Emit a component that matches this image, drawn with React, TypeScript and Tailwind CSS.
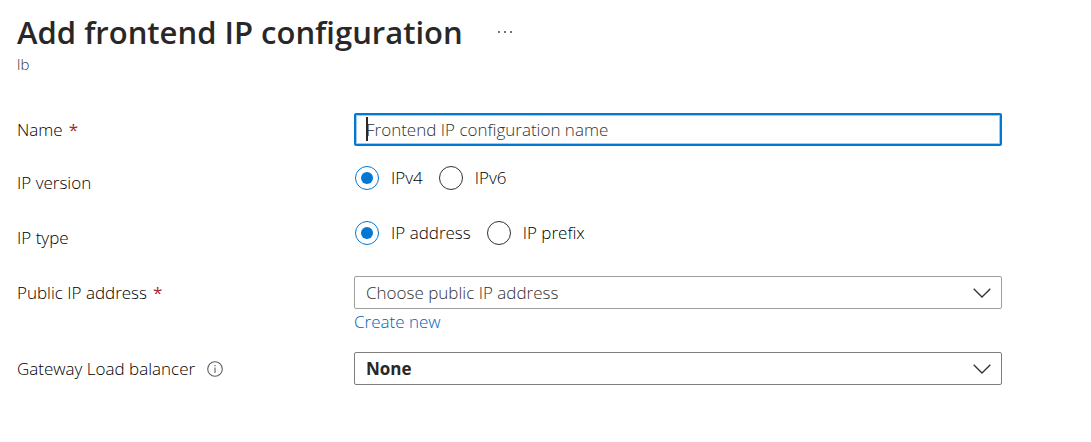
import { useId, useState } from "react";
import type { ReactNode, SelectHTMLAttributes } from "react";

function Required() {
  return (
    <span aria-hidden="true" className="ml-1.5 font-medium text-[#a4262c]">
      *
    </span>
  );
}

function Row({ className, label, children }: { className: string; label: ReactNode; children: ReactNode }) {
  return (
    <div className={`flex items-start ${className}`}>
      <div className="flex w-[337px] shrink-0 items-center pt-[5px]">{label}</div>
      <div className="min-w-0 max-w-[648px] flex-1">{children}</div>
    </div>
  );
}

function SelectBox({ className, ...props }: SelectHTMLAttributes<HTMLSelectElement>) {
  return (
    <div className="relative">
      <select
        {...props}
        className={`block h-[33px] w-full appearance-none rounded-xs border bg-white pr-10 pl-[11px] outline-none ${className}`}
      />
      <svg
        aria-hidden="true"
        viewBox="0 0 18 10"
        className="pointer-events-none absolute top-3 right-[11px] h-2.5 w-[18px] fill-none stroke-[#323130]"
        strokeWidth="1.3"
      >
        <path d="M0.7 0.7 9 9 17.3 0.7" />
      </svg>
    </div>
  );
}

function RadioGroup({ labelledBy, options }: { labelledBy: string; options: string[] }) {
  const [value, setValue] = useState(options[0]);
  const name = useId();
  return (
    <div role="radiogroup" aria-labelledby={labelledBy} className="flex gap-4 pl-px">
      {options.map((option) => (
        <label key={option} className="flex items-center gap-3">
          <input
            type="radio"
            name={name}
            checked={value === option}
            onChange={() => setValue(option)}
            className="grid size-6 shrink-0 appearance-none place-content-center rounded-full border border-[#323130] bg-white before:size-3 before:rounded-full checked:border-[#0078d4] checked:before:bg-[#0078d4]"
          />
          {option}
        </label>
      ))}
    </div>
  );
}

export default function App() {
  const [name, setName] = useState("");
  return (
    <main className="bg-white px-[17px] pt-3 pb-14 font-['Open_Sans','Noto_Sans',sans-serif] text-[17px] leading-6 font-light text-black">
      <header>
        <div className="flex items-center gap-[34px]">
          <h1 className="text-[31px] leading-10 font-semibold text-[#292827]">Add frontend IP configuration</h1>
          <button type="button" aria-label="More options">
            <svg aria-hidden="true" viewBox="0 0 16 4" className="h-1 w-4 fill-[#323130]">
              <circle cx="2" cy="2" r="0.9" />
              <circle cx="8" cy="2" r="0.9" />
              <circle cx="14" cy="2" r="0.9" />
            </svg>
          </button>
        </div>
        <p className="text-[15px] leading-6 text-[#323130]">lb</p>
      </header>

      <form className="pt-[37px]">
        <Row
          className=""
          label={
            <label htmlFor="name">
              Name
              <Required />
            </label>
          }
        >
          <div className="relative">
            <input
              id="name"
              type="text"
              value={name}
              onChange={(e) => setName(e.target.value)}
              placeholder="Frontend IP configuration name"
              className="block h-[33px] w-full rounded-xs border-2 border-[#0078d4] bg-white px-2.5 inset-ring inset-ring-[#9fcbee] outline-none placeholder:text-[#323130]"
            />
            <span aria-hidden="true" className="pointer-events-none absolute top-1 left-3 h-6 w-0.5 bg-[#292827]" />
          </div>
        </Row>

        <Row className="mt-5" label={<span id="ip-version">IP version</span>}>
          <RadioGroup labelledBy="ip-version" options={["IPv4", "IPv6"]} />
        </Row>

        <Row className="mt-[26px]" label={<span id="ip-type">IP type</span>}>
          <RadioGroup labelledBy="ip-type" options={["IP address", "IP prefix"]} />
        </Row>

        <Row
          className="mt-[26px]"
          label={
            <label htmlFor="public-ip">
              Public IP address
              <Required />
            </label>
          }
        >
          <SelectBox id="public-ip" className="border-[#a19f9d] text-[#323130]">
            <option>Choose public IP address</option>
          </SelectBox>
          <a href="#create" className="mt-px block w-fit text-[#0062b8]">
            Create new
          </a>
        </Row>

        <Row
          className="mt-[18px]"
          label={
            <>
              <label htmlFor="gateway">Gateway Load balancer</label>
              <svg
                aria-hidden="true"
                viewBox="0 0 16 16"
                className="ml-3 size-4 fill-none stroke-[#605e5c]"
                strokeWidth="1.1"
              >
                <circle cx="8" cy="8" r="7.3" />
                <path d="M8 6.5V12M8 4V5.3" />
              </svg>
            </>
          }
        >
          <SelectBox id="gateway" className="border-[#7f7d7b] font-bold text-[#292827]">
            <option>None</option>
          </SelectBox>
        </Row>
      </form>
    </main>
  );
}
